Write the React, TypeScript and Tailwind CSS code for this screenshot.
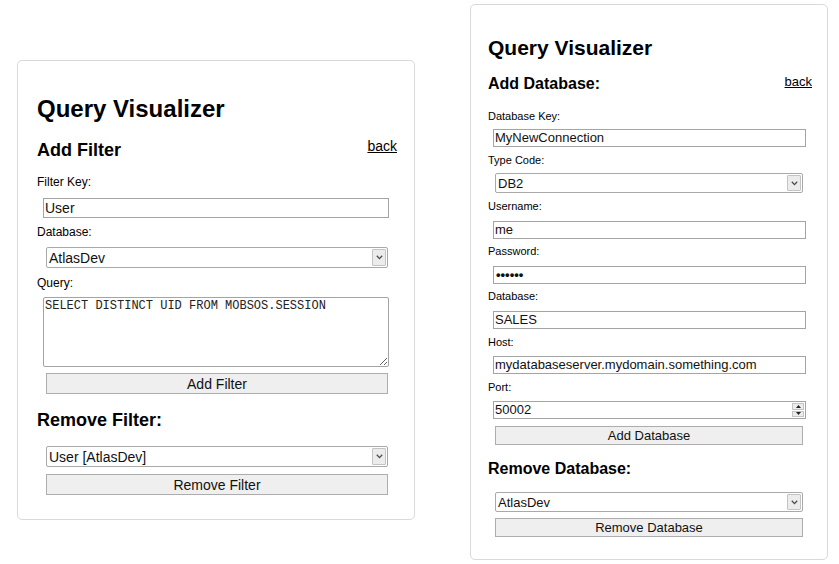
import React from "react";

const SANS = "font-['Liberation_Sans',Arial,sans-serif]";

function Chevron() {
  return (
    <svg width="7" height="5" viewBox="0 0 7 5">
      <path d="M0.8 0.8 L3.5 3.6 L6.2 0.8" fill="none" stroke="#4a4a4a" strokeWidth="1.3" />
    </svg>
  );
}

function Select({ value, className, text }: { value: string; className: string; text: string }) {
  return (
    <div
      className={`flex items-center justify-between border border-[#a9a9a9] rounded-[2px] bg-white pl-[2px] pr-[1px] py-[1px] ${className}`}
    >
      <span className={`${text} leading-none text-[#111]`}>{value}</span>
      <div className="h-full w-[14px] flex items-center justify-center bg-[#ececec] border border-[#c4c4c4] rounded-[1px]">
        <Chevron />
      </div>
    </div>
  );
}

function TextBox({ value, className, text }: { value: string; className: string; text: string }) {
  return (
    <div
      className={`flex items-center border border-[#a4a4a4] bg-white pl-[1px] pb-[1px] ${className}`}
    >
      <span className={`${text} leading-none text-[#111] whitespace-nowrap`}>{value}</span>
    </div>
  );
}

function Button({ label, className, text }: { label: string; className: string; text: string }) {
  return (
    <div
      className={`flex items-center justify-center border border-[#adadad] bg-[#efefef] ${className}`}
    >
      <span className={`${text} leading-none text-[#111]`}>{label}</span>
    </div>
  );
}

function LeftCard() {
  const inputText = "text-[14px]";
  return (
    <div className="ml-[17px] mt-[60px] w-[398px] h-[460px] shrink-0 border border-[#d9d9d9] rounded-[5px] pt-[34px] pl-[19px] pr-[17px] flex flex-col items-start">
      <h1 className="text-[24px] leading-[28px] font-bold">Query Visualizer</h1>
      <div className="mt-[16px] w-full flex justify-between items-start">
        <h2 className="text-[18px] leading-[22px] font-bold">Add Filter</h2>
        <a className="text-[14px] leading-[14px] underline cursor-pointer">back</a>
      </div>
      <div className="mt-[14px] text-[12px] leading-[14px]">Filter Key:</div>
      <TextBox value="User" className="mt-[9px] ml-[6px] w-[346px] h-[20px]" text={inputText} />
      <div className="mt-[7px] text-[12px] leading-[14px]">Database:</div>
      <Select value="AtlasDev" className="mt-[8px] ml-[9px] w-[342px] h-[21px]" text={inputText} />
      <div className="mt-[8px] text-[12px] leading-[14px]">Query:</div>
      <textarea
        readOnly
        value="SELECT DISTINCT UID FROM MOBSOS.SESSION"
        className="mt-[7px] ml-[6px] w-[346px] h-[70px] border border-[#a4a4a4] rounded-[2px] bg-white px-[1px] pt-[1px] font-['Liberation_Mono','Courier_New',monospace] text-[12px] leading-[14px] text-[#222] outline-none resize"
      />
      <Button label="Add Filter" className="mt-[6px] ml-[9px] w-[342px] h-[21px]" text={inputText} />
      <h2 className="mt-[15px] text-[18px] leading-[22px] font-bold">Remove Filter:</h2>
      <Select value="User [AtlasDev]" className="mt-[15px] ml-[9px] w-[342px] h-[21px]" text={inputText} />
      <Button label="Remove Filter" className="mt-[7px] ml-[9px] w-[342px] h-[21px]" text={inputText} />
    </div>
  );
}

function Spinner() {
  return (
    <div className="h-full w-[13px] flex flex-col gap-[1px] py-[1px] pr-[1px]">
      <div className="flex-1 flex items-center justify-center bg-[#ececec] border border-[#c4c4c4]">
        <svg width="5" height="3" viewBox="0 0 5 3">
          <path d="M0 3 L2.5 0 L5 3 Z" fill="#222" />
        </svg>
      </div>
      <div className="flex-1 flex items-center justify-center bg-[#ececec] border border-[#c4c4c4]">
        <svg width="5" height="3" viewBox="0 0 5 3">
          <path d="M0 0 L2.5 3 L5 0 Z" fill="#222" />
        </svg>
      </div>
    </div>
  );
}

function RightCard() {
  const t = "text-[13px]";
  const label = "text-[11px] leading-[13px]";
  const inp = "ml-[5px] w-[313px] h-[18px]";
  const sel = "ml-[7px] w-[308px]";
  return (
    <div className="ml-[55px] mt-[4px] w-[358px] h-[556px] shrink-0 border border-[#d9d9d9] rounded-[5px] pt-[30px] pl-[17px] pr-[15px] flex flex-col items-start">
      <h1 className="text-[21px] leading-[25px] font-bold">Query Visualizer</h1>
      <div className="mt-[14px] w-full flex justify-between items-start">
        <h2 className="text-[16px] leading-[20px] font-bold">Add Database:</h2>
        <a className="mt-[1px] text-[13px] leading-[13px] underline cursor-pointer">back</a>
      </div>
      <div className={`mt-[16px] ${label}`}>Database Key:</div>
      <TextBox value="MyNewConnection" className={`mt-[6px] ${inp}`} text={t} />
      <div className={`mt-[7px] ${label}`}>Type Code:</div>
      <Select value="DB2" className={`mt-[6px] ${sel} h-[20px]`} text={t} />
      <div className={`mt-[7px] ${label}`}>Username:</div>
      <TextBox value="me" className={`mt-[8px] ${inp}`} text={t} />
      <div className={`mt-[6px] ${label}`}>Password:</div>
      <TextBox value="••••••" className={`mt-[8px] ${inp}`} text={`${t} font-bold pl-[1px]`} />
      <div className={`mt-[6px] ${label}`}>Database:</div>
      <TextBox value="SALES" className={`mt-[8px] ${inp}`} text={t} />
      <div className={`mt-[7px] ${label}`}>Host:</div>
      <TextBox value="mydatabaseserver.mydomain.something.com" className={`mt-[7px] ${inp}`} text={t} />
      <div className={`mt-[7px] ${label}`}>Port:</div>
      <div className={`mt-[7px] ${inp} flex items-center justify-between border border-[#a4a4a4] bg-white pl-[1px]`}>
        <span className={`${t} leading-none text-[#111] pb-[1px]`}>50002</span>
        <Spinner />
      </div>
      <Button label="Add Database" className={`mt-[7px] ${sel} h-[19px]`} text={t} />
      <h2 className="mt-[14px] text-[16px] leading-[20px] font-bold">Remove Database:</h2>
      <Select value="AtlasDev" className={`mt-[13px] ${sel} h-[20px]`} text={t} />
      <Button label="Remove Database" className={`mt-[6px] ${sel} h-[19px]`} text={t} />
    </div>
  );
}

export default function App() {
  return (
    <div className={`w-[839px] h-[564px] bg-white text-black flex items-start overflow-hidden ${SANS}`}>
      <LeftCard />
      <RightCard />
    </div>
  );
}
